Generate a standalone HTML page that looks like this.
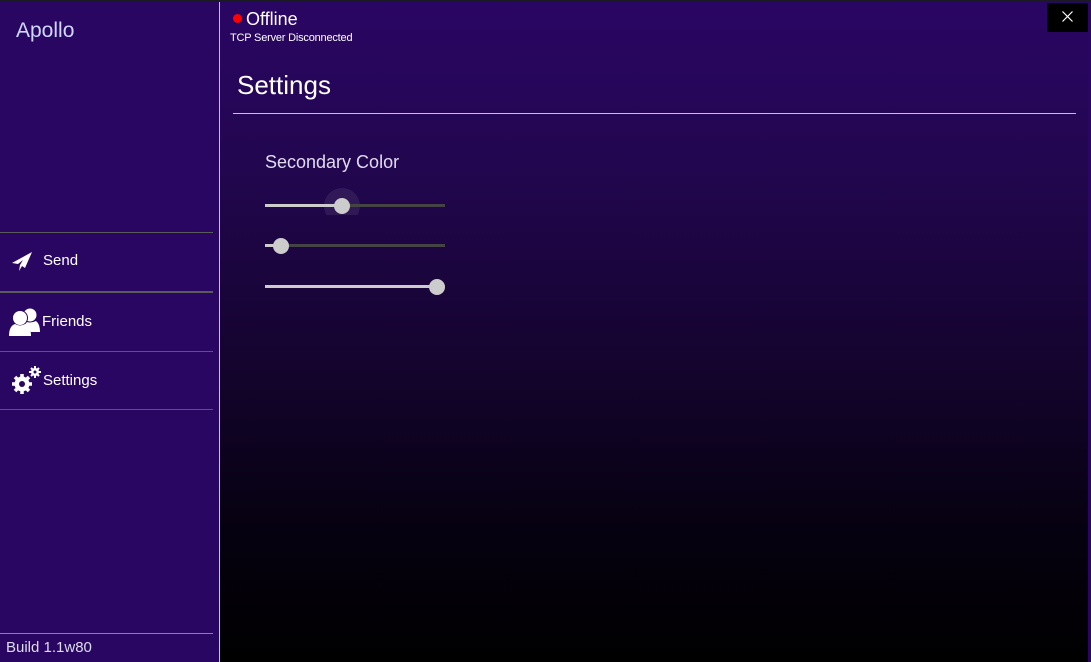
<!DOCTYPE html>
<html><head><style>
body{margin:0;width:1091px;height:662px;overflow:hidden;background:#000;font-family:"Liberation Sans",sans-serif;position:relative}
.top{position:absolute;left:0;top:0;width:1091px;height:2px;background:#1a1a22}
.side{position:absolute;left:0;top:2px;width:219px;height:660px;background:#2a0663}
.vline{position:absolute;left:219px;top:2px;width:1px;height:660px;background:#c8c0d8}
.main{position:absolute;left:220px;top:2px;width:868px;height:660px;background:linear-gradient(#2a0664 0%,#22064f 25%,#14042e 55%,#060110 80%,#000 100%)}
.rs{position:absolute;left:1088px;top:2px;width:3px;height:660px;background:#2a0663}
.hl{position:absolute;left:0;width:213px;background:#5a5a5a}
.t{position:absolute;color:#fff;white-space:nowrap}
.track{position:absolute;left:265px;width:180px;height:3px;background:#444}
.fill{position:absolute;left:0;top:0;height:3px;background:#ccc}
.thumb{position:absolute;width:16px;height:16px;border-radius:50%;background:#ccc}
</style></head><body>
<div class="top"></div>
<div class="side"></div>
<div class="main"></div>
<div class="rs"></div>
<div class="vline"></div>
<div class="t" style="left:16px;top:19px;font-size:21px;color:#cfd8ff">Apollo</div>
<div class="hl" style="top:232px;height:1px"></div>
<div class="hl" style="top:291px;height:2px"></div>
<div class="hl" style="top:351px;height:1px"></div>
<div class="hl" style="top:409px;height:1px"></div>
<div class="hl" style="top:633px;height:1px;background:#8a80a0"></div>
<svg style="position:absolute;left:11px;top:251px" width="22" height="22" viewBox="0 0 22 22"><path d="M21 1 L1 12 L7 13 L12 9 L9 14 L8 20 L11 15 L14 17 Z" fill="#fff"/></svg>
<div class="t" style="left:43px;top:252px;font-size:15px">Send</div>
<svg style="position:absolute;left:9px;top:307px" width="32" height="30" viewBox="0 0 32 30"><circle cx="21" cy="8" r="6.5" fill="#fff"/><path d="M14 14 Q21 17 27 14 Q31 17 31 25 L22 25 Z" fill="#fff"/><circle cx="11" cy="11" r="8" fill="#2a0663"/><circle cx="11" cy="11" r="7" fill="#fff"/><path d="M0 29 Q0 19 6 17 Q11 20 16 17 Q22 19 22 29 Z" fill="#fff"/></svg>
<div class="t" style="left:42px;top:313px;font-size:15px">Friends</div>
<svg style="position:absolute;left:11px;top:365px" width="30" height="30" viewBox="0 0 30 30"><g fill="#fff"><circle cx="11" cy="19" r="7.5"/><g stroke="#fff" stroke-width="3.5"><line x1="11" y1="9" x2="11" y2="29"/><line x1="1" y1="19" x2="21" y2="19"/><line x1="4" y1="12" x2="18" y2="26"/><line x1="18" y1="12" x2="4" y2="26"/></g><circle cx="24" cy="7" r="4"/><g stroke="#fff" stroke-width="2"><line x1="24" y1="1" x2="24" y2="13"/><line x1="18" y1="7" x2="30" y2="7"/><line x1="20" y1="3" x2="28" y2="11"/><line x1="28" y1="3" x2="20" y2="11"/></g></g><circle cx="11" cy="19" r="3" fill="#2a0663"/><circle cx="24" cy="7" r="1.5" fill="#2a0663"/></svg>
<div class="t" style="left:43px;top:372px;font-size:15px">Settings</div>
<div class="t" style="left:6px;top:639px;font-size:15px;color:#dde">Build 1.1w80</div>
<div style="position:absolute;left:233px;top:14px;width:9px;height:9px;border-radius:50%;background:#f00"></div>
<div class="t" style="left:246px;top:9px;font-size:18px">Offline</div>
<div class="t" style="left:230px;top:32px;font-size:11px;letter-spacing:-0.2px">TCP Server Disconnected</div>
<div style="position:absolute;left:1047px;top:3px;width:41px;height:29px;background:#000"></div>
<svg style="position:absolute;left:1062px;top:11px" width="11" height="11" viewBox="0 0 11 11"><path d="M0.5 0.5L10.5 10.5M10.5 0.5L0.5 10.5" stroke="#fff" stroke-width="1.2"/></svg>
<div class="t" style="left:237px;top:70px;font-size:26px;font-weight:300">Settings</div>
<div style="position:absolute;left:233px;top:113px;width:843px;height:1px;background:#c8c0d8"></div>
<div class="t" style="left:265px;top:152px;font-size:18px;color:#e0dcef">Secondary Color</div>
<div style="position:absolute;left:324px;top:188px;width:36px;height:36px;border-radius:50%;background:rgba(255,255,255,.08);clip-path:inset(0 0 9px 0)"></div>
<div class="track" style="top:204px"><div class="fill" style="width:77px"></div></div>
<div class="thumb" style="left:334px;top:198px"></div>
<div class="track" style="top:244px"><div class="fill" style="width:16px"></div></div>
<div class="thumb" style="left:273px;top:238px"></div>
<div class="track" style="top:285px"><div class="fill" style="width:172px"></div></div>
<div class="thumb" style="left:429px;top:279px"></div>
</body></html>
